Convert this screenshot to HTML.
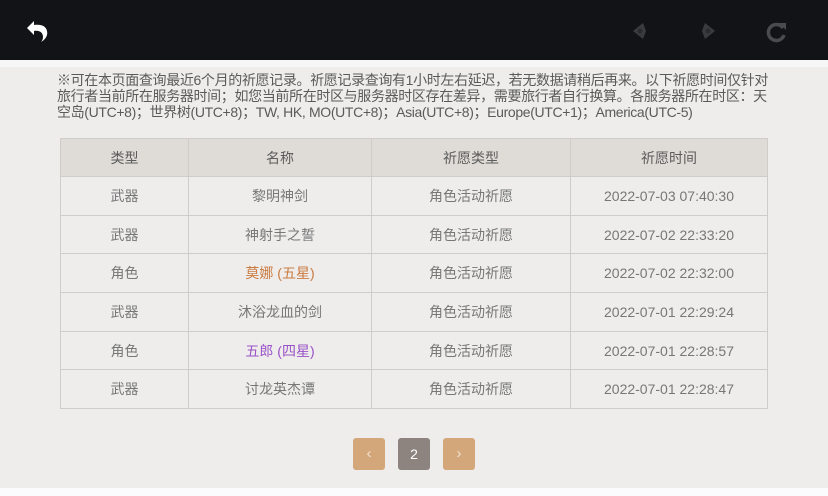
<!DOCTYPE html>
<html><head><meta charset="utf-8"><style>
*{margin:0;padding:0;box-sizing:border-box}
body{width:828px;height:496px;overflow:hidden;background:#eeedec;font-family:"Liberation Sans","Noto Sans CJK SC",sans-serif;position:relative}
.top{position:absolute;left:0;top:0;width:828px;height:60px;background:#121317}
.strip{position:absolute;left:0;top:60px;width:828px;height:7px;background:#f6f6f6}
.note{position:absolute;left:57px;top:72px;font-size:14px;line-height:16px;color:#5a5a5a;white-space:nowrap}
.note div{letter-spacing:-0.35px}
table{position:absolute;left:60px;top:138px;width:708px;border-collapse:collapse}
td,th{border:1px solid #cfcdca;text-align:center;font-size:14px;color:#777;height:38.7px;font-weight:normal}
th{background:#dfdbd6;color:#5c5c5c;height:38px}
.g{color:#cb7a3f}.p{color:#9a52c8}
.btn{position:absolute;top:438px;width:32px;height:32px;border-radius:3px;color:#f2e2cf;font-size:15px;text-align:center;line-height:32px}
.bottom{position:absolute;left:0;top:488px;width:828px;height:8px;background:#fbfafc}
</style></head><body>
<div class="top">
<svg style="position:absolute;left:25px;top:18px" width="26" height="26" viewBox="0 0 26 26"><path d="M9 3 L2 10 L9 17 L9 13 C15 12 18 15 18 19 C18 21 17 23 16 24 C21 21 23 17 22 13 C21 8 16 6 9 7 Z" fill="#fff"/></svg>
<svg style="position:absolute;left:630px;top:21px" width="20" height="20" viewBox="0 0 20 20"><path d="M13 2 L3 10 L13 18 L16 10 Z" fill="#3a3b3e"/><circle cx="10" cy="10" r="2.5" fill="#2a2b2e"/></svg>
<svg style="position:absolute;left:698px;top:21px" width="20" height="20" viewBox="0 0 20 20"><path d="M7 2 L17 10 L7 18 L4 10 Z" fill="#3a3b3e"/><circle cx="10" cy="10" r="2.5" fill="#2a2b2e"/></svg>
<svg style="position:absolute;left:765px;top:20px" width="24" height="24" viewBox="0 0 24 24"><path d="M18 8 A8 8 0 1 0 19 15" fill="none" stroke="#4a4b4e" stroke-width="3.5"/><path d="M14 3 L21 3 L21 10 Z" fill="#4a4b4e"/></svg>
</div>
<div class="strip"></div>
<div class="note">
<div>※可在本页面查询最近6个月的祈愿记录。祈愿记录查询有1小时左右延迟，若无数据请稍后再来。以下祈愿时间仅针对</div>
<div>旅行者当前所在服务器时间；如您当前所在时区与服务器时区存在差异，需要旅行者自行换算。各服务器所在时区：天</div>
<div>空岛(UTC+8)；世界树(UTC+8)；TW, HK, MO(UTC+8)；Asia(UTC+8)；Europe(UTC+1)；America(UTC-5)</div>
</div>
<table>
<tr><th style="width:128px">类型</th><th style="width:183px">名称</th><th style="width:199px">祈愿类型</th><th>祈愿时间</th></tr>
<tr><td>武器</td><td>黎明神剑</td><td>角色活动祈愿</td><td>2022-07-03 07:40:30</td></tr>
<tr><td>武器</td><td>神射手之誓</td><td>角色活动祈愿</td><td>2022-07-02 22:33:20</td></tr>
<tr><td>角色</td><td class="g">莫娜 (五星)</td><td>角色活动祈愿</td><td>2022-07-02 22:32:00</td></tr>
<tr><td>武器</td><td>沐浴龙血的剑</td><td>角色活动祈愿</td><td>2022-07-01 22:29:24</td></tr>
<tr><td>角色</td><td class="p">五郎 (四星)</td><td>角色活动祈愿</td><td>2022-07-01 22:28:57</td></tr>
<tr><td>武器</td><td>讨龙英杰谭</td><td>角色活动祈愿</td><td>2022-07-01 22:28:47</td></tr>
</table>
<div class="btn" style="left:353px;background:#d3a77a">‹</div>
<div class="btn" style="left:398px;background:#8d8480;color:#fff;font-size:14px">2</div>
<div class="btn" style="left:443px;background:#d3a77a">›</div>
<div class="bottom"></div>
</body></html>
